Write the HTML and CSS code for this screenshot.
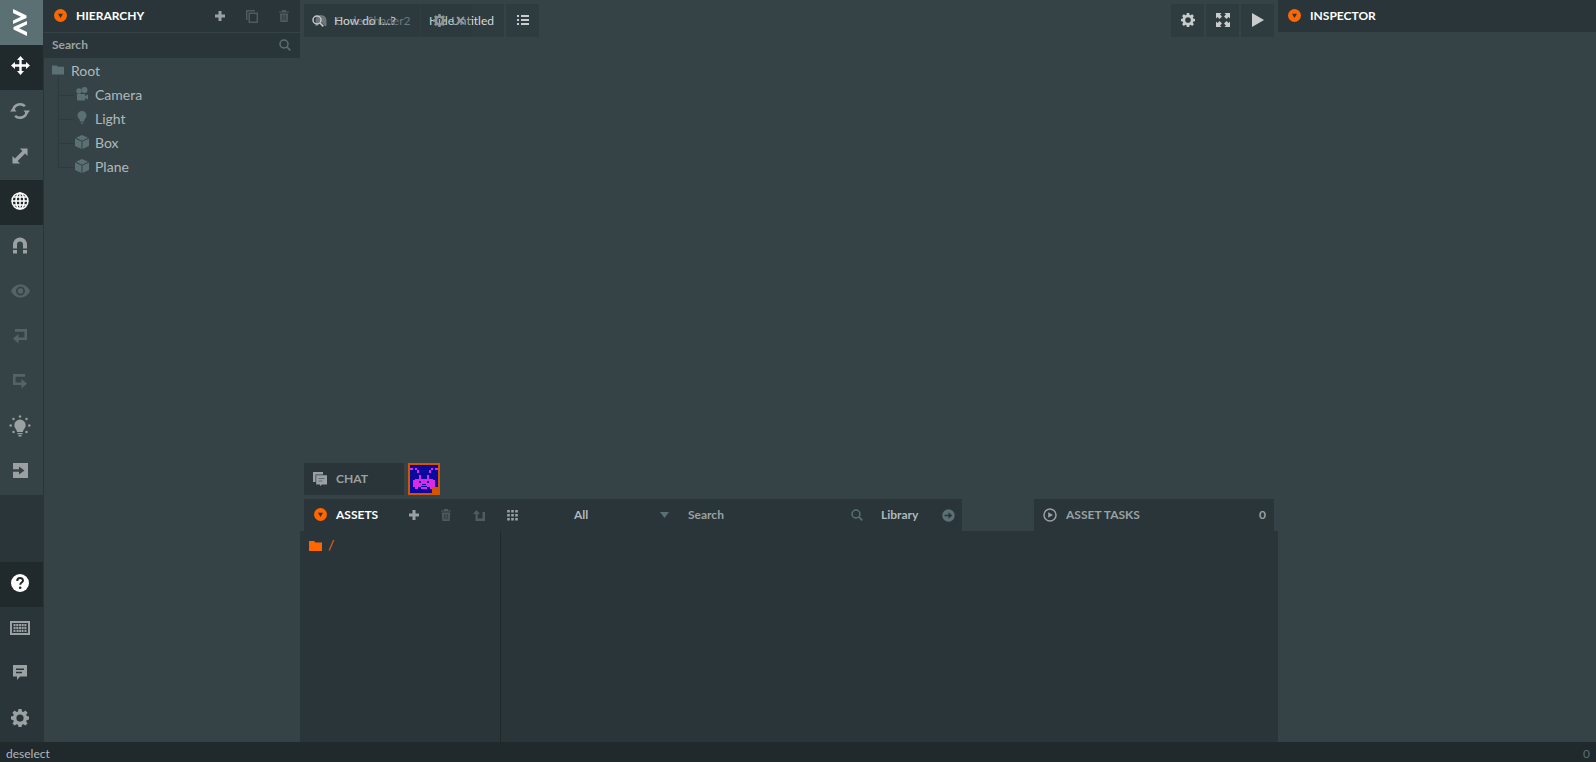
FILE: index.html
```html
<!DOCTYPE html>
<html lang="en">
<head>
<meta charset="utf-8">
<title>Scene Editor</title>
<link rel="stylesheet" href="styles.css">
</head>
<body>
<svg class="defs" aria-hidden="true">
  <symbol id="i-gear" viewBox="0 0 20 20"><path fill-rule="evenodd" d="M8.300 0h3.400l.5 2.700 1.500.6 2.300-1.500 2.400 2.400-1.500 2.200.6 1.500 2.500.5v3.400l-2.500.5-.6 1.500 1.500 2.200-2.400 2.400-2.300-1.500-1.500.6-.5 2.500H8.300l-.5-2.500-1.500-.6L4 18.400 1.600 16l1.500-2.200-.6-1.500L0 11.800V8.400l2.500-.5.600-1.500L1.600 4.200 4 1.800l2.300 1.500 1.500-.6zM10 6.100a4 4 0 1 0 0 8 4 4 0 0 0 0-8z"/></symbol>
  <symbol id="i-search" viewBox="0 0 12 12"><circle cx="5" cy="5" r="4" fill="none" stroke="currentColor" stroke-width="1.500"/><path d="M8 8l3.300 3.300" stroke="currentColor" stroke-width="1.700"/></symbol>
  <symbol id="i-fold" viewBox="0 0 13 13"><circle cx="6.500" cy="6.500" r="6.500"/><path d="M4 4.800h5L6.500 9z" fill="#293538"/></symbol>
  <symbol id="i-plus" viewBox="0 0 10 10"><path d="M3.500 0h3v3.500H10v3H6.500V10h-3V6.500H0v-3h3.500z"/></symbol>
  <symbol id="i-trash" viewBox="0 0 10 12"><path d="M0 1.500h3V0h4v1.500h3v1H0zM.8 3.500h8.400L8.600 12H1.400z"/><path d="M3.300 5v5.500M5 5v5.500M6.700 5v5.500" stroke="#293538" stroke-width=".7"/></symbol>
  <symbol id="i-folder" viewBox="0 0 13 10"><path d="M0 0h5l1.500 1.500H13V10H0z"/></symbol>
  <symbol id="i-cube" viewBox="0 0 14 14"><path d="M7 0l6 2.800L7 5.700 1 2.800zM0 3.600l6.500 3V14L0 11zM14 3.600l-6.500 3V14l6.500-3z"/></symbol>
</svg>
<div class="app">
  <nav class="toolbar" aria-label="Tools">
    <button class="tool logo" aria-label="Menu"><svg width="16" height="28" viewBox="0 0 16 28"><path d="M1 0l13.500 6.500V9L1 15v-3.600l8-3.600L1 4z"/><path d="M15 12v3.600l-8 3.600 8 3.800v4L1.500 20.500V18z"/></svg></button>
    <button class="tool active" aria-label="Translate"><svg width="19" height="19" viewBox="0 0 19 19"><path d="M9.500 0L13 4h-2.300v4.300H15V6l4 3.500-4 3.500v-2.300h-4.300V15H13l-3.500 4L6 15h2.300v-4.300H4V13L0 9.500 4 6v2.300h4.300V4H6z"/></svg></button>
    <button class="tool" aria-label="Rotate"><svg width="20" height="18" viewBox="0 0 20 18"><path class="line" d="M3.200 9A6.900 6.900 0 0 1 14.900 4.200M16.800 9A6.900 6.900 0 0 1 5.100 13.800" stroke-width="2.500"/><path d="M0 9.500h6.500L3.200 5.500zM20 8.500h-6.500l3.300 4z"/></svg></button>
    <button class="tool" aria-label="Scale"><svg width="16" height="16" viewBox="0 0 16 16"><path d="M8 .5h7.500V8l-2.400-2.400-7.500 7.500L8 15.500H.5V8l2.400 2.400 7.500-7.500z"/></svg></button>
    <button class="tool active" aria-label="World space"><svg width="18" height="18" viewBox="0 0 18 18"><g class="line" stroke-width="1.500"><circle cx="9" cy="9" r="8"/><ellipse cx="9" cy="9" rx="4" ry="8"/><path d="M9 1v16M1 9h16M2.500 5h13M2.500 13h13"/></g></svg></button>
    <button class="tool" aria-label="Snap"><svg width="16" height="17" viewBox="0 0 16 17"><path d="M1 11.500V7.500a7 7 0 0 1 14 0v4h-4v-4a3 3 0 0 0-6 0v4zM1 13h4v3.500H1zM11 13h4v3.500h-4z"/></svg></button>
    <button class="tool dim" aria-label="Focus"><svg width="19" height="14" viewBox="0 0 19 14"><path fill-rule="evenodd" d="M9.500.5C5 .5 2 3 0 7c2 4 5 6.500 9.500 6.500S17 11 19 7C17 3 14 .5 9.500.5zm0 2a4.500 4.500 0 1 1 0 9 4.500 4.500 0 0 1 0-9z"/><circle cx="9.500" cy="7" r="2.700"/></svg></button>
    <button class="tool dim" aria-label="Undo"><svg width="16" height="16" viewBox="0 0 16 16"><path d="M3 1h12v11H6.500v3.500L1 10.500 6.500 6v3.500h6V3.800H3z"/></svg></button>
    <button class="tool dim" aria-label="Redo"><svg width="16" height="16" viewBox="0 0 16 16"><path d="M13 1H1v11h8.500v3.500l5.500-5L9.500 6v3.500h-6V3.800H13z"/></svg></button>
    <button class="tool" aria-label="Bake lights"><svg width="22" height="22" viewBox="0 0 22 22"><path d="M11 4.500a5.700 5.700 0 0 0-5.700 5.700c0 3 2.700 4 2.700 6.800h6c0-2.800 2.700-3.800 2.700-6.800A5.700 5.700 0 0 0 11 4.500zM8.500 18h5v1.300h-5zM9.500 20h3v1.500h-3z"/><circle cx="11" cy="1.500" r="1.200"/><circle cx="4.500" cy="4" r="1.200"/><circle cx="17.500" cy="4" r="1.200"/><circle cx="1.700" cy="10.500" r="1.200"/><circle cx="20.300" cy="10.500" r="1.200"/><circle cx="4.500" cy="17" r="1.200"/><circle cx="17.500" cy="17" r="1.200"/></svg></button>
    <button class="tool" aria-label="Publish"><svg width="15" height="15" viewBox="0 0 15 15"><path d="M0 0h15v15H0z"/><path d="M0 6.200h6V3.500l5.500 4L6 11.500V8.800H0z" fill="#364346"/></svg></button>
    <div class="gap"></div>
    <button class="tool active" aria-label="Help"><svg width="18" height="18" viewBox="0 0 18 18"><circle cx="9" cy="9" r="9"/><path d="M6.200 7C6.200 3 12 3.200 12 6.500c0 2-2.800 2.200-2.800 4.300" fill="none" stroke="#20292b" stroke-width="2"/><circle cx="9.200" cy="13.700" r="1.300" fill="#20292b"/></svg></button>
    <button class="tool" aria-label="Keyboard shortcuts"><svg width="20" height="14" viewBox="0 0 20 14"><path class="line" d="M1 1h18v12H1z" stroke-width="2"/><path d="M3.500 4.200h13M3.500 7h13M3.500 9.800h2M6.500 9.800h7M14.500 9.800h2" stroke="currentColor" stroke-width="2.200" stroke-dasharray="2.100 .6"/></svg></button>
    <button class="tool" aria-label="Forum"><svg width="14" height="15" viewBox="0 0 14 15"><path fill-rule="evenodd" d="M0 0h14v11.500H7L4 15v-3.500H0zM3 3.500V5h8V3.500zM3 6.800v1.500h6V6.800z"/></svg></button>
    <button class="tool" aria-label="Settings"><svg width="18" height="18"><use href="#i-gear"/></svg></button>
  </nav>

  <aside class="hierarchy">
    <header class="head">
      <button class="fold" aria-label="Fold hierarchy"><svg width="13" height="13"><use href="#i-fold"/></svg></button>
      <h2>HIERARCHY</h2>
      <div class="actions">
        <button aria-label="Add entity"><svg width="10" height="10"><use href="#i-plus"/></svg></button>
        <button class="dim" aria-label="Duplicate"><svg width="12" height="13" viewBox="0 0 12 13"><path class="line" stroke-width="1.500" d="M3.200 3.200h8.100v9.100H3.200zM.7 10V.7H9"/></svg></button>
        <button class="dim" aria-label="Delete"><svg width="10" height="12"><use href="#i-trash"/></svg></button>
      </div>
    </header>
    <label class="search"><input type="text" placeholder="Search" aria-label="Search hierarchy"><svg width="12" height="12"><use href="#i-search"/></svg></label>
    <ul class="tree">
      <li class="row"><svg width="12" height="10"><use href="#i-folder"/></svg>Root</li>
      <li>
        <ul class="branch">
          <li class="row"><svg width="14" height="14" viewBox="0 0 14 14"><circle cx="4" cy="4" r="2.700"/><circle cx="9.500" cy="3" r="3"/><path d="M2 7h8v2l3-1.500v5L10 11v2.500H2z"/></svg>Camera</li>
          <li class="row"><svg width="14" height="14" viewBox="0 0 14 14"><path d="M7 0a4.500 4.500 0 0 0-4.500 4.500C2.500 7 5 8 5 10.500h4C9 8 11.500 7 11.500 4.500A4.500 4.500 0 0 0 7 0zM5.500 11.500h3L7 13.500z"/></svg>Light</li>
          <li class="row"><svg width="14" height="14"><use href="#i-cube"/></svg>Box</li>
          <li class="row"><svg width="14" height="14"><use href="#i-cube"/></svg>Plane</li>
        </ul>
      </li>
    </ul>
  </aside>

  <main class="center">
    <section class="viewport">
      <div class="topbar">
        <div class="titles">
          <div class="chip project"><svg width="12" height="12" viewBox="0 0 12 12"><path d="M6 0a5.500 5.500 0 0 1 5.500 5.500V11H10L6 7 2 11H.5V5.500A5.500 5.500 0 0 1 6 0z"/></svg>CoderShader2</div>
          <div class="chip scene">Untitled</div>
          <div class="help-layer">
            <svg width="12" height="12"><use href="#i-search"/></svg>
            <input type="text" placeholder="How do I...?" aria-label="How do I">
            <button class="hide">Hide</button>
          </div>
          <div class="scene-tools">
            <svg width="13" height="13"><use href="#i-gear"/></svg>
            <svg width="9" height="9" viewBox="0 0 9 9"><path d="M1 1l7 7M8 1L1 8" stroke="currentColor" stroke-width="2"/></svg>
          </div>
        </div>
        <button class="square" aria-label="Scenes"><svg width="12" height="10" viewBox="0 0 12 10"><path d="M0 0h2v2H0zM4 0h8v2H4zM0 4h2v2H0zM4 4h8v2H4zM0 8h2v2H0zM4 8h8v2H4z"/></svg></button>
        <div class="launch">
          <button class="square" aria-label="Scene settings"><svg width="14" height="14"><use href="#i-gear"/></svg></button>
          <button class="square" aria-label="Full screen"><svg width="14" height="14" viewBox="0 0 14 14"><path d="M0 0h5.500L4 1.500l2 2L3.500 6l-2-2L0 5.500zM14 0v5.500L12.500 4l-2 2L8 3.500l2-2L8.500 0zM0 14V8.500L1.500 10l2-2L6 10.500l-2 2L5.500 14zM14 14H8.500l1.500-1.500-2-2L10.500 8l2 2L14 8.500z"/></svg></button>
          <button class="square" aria-label="Launch"><svg width="12" height="14" viewBox="0 0 12 14"><path d="M0 0l12 7-12 7z"/></svg></button>
        </div>
      </div>
      <div class="chatbar">
        <button class="chat"><svg width="14" height="14" viewBox="0 0 14 14"><path d="M0 0h10v2.500H2.500V10H0z"/><path d="M3.200 3.200H14v9.300H9L7 14v-1.500H3.200z"/><path d="M5.500 6.500h6M5.500 9h4" stroke="#5f6b6e"/></svg>CHAT</button>
        <svg class="avatar" width="32" height="32" viewBox="0 0 32 32" role="img" aria-label="User avatar">
          <path fill="#0a0aa0" d="M0 0h32v32H0z"/>
          <g fill="#d92be6"><path d="M2 5h3v2H2zM7 5h2v2h2v3H9V7H7zM23 5h2v2h-2v3h-2V7h2zM27 5h3v2h-3zM11 12h2v4h-2zM19 12h2v4h-2z"/><path fill-rule="evenodd" d="M7 16h18v1h2v7h-2v2h-3v-2h-3v2h-6v-2h-3v2H7v-2H5v-7h2zM11 18v2h2v-2zM19 18v2h2v-2zM14 21v1h4v-1zM13 23v1h6v-1z"/></g>
          <path fill="#d45500" fill-rule="evenodd" d="M0 0h32v32H0zM2 2v28h22v-6h6V2z"/>
        </svg>
      </div>
    </section>
    <section class="assets">
      <div class="asset-heads">
        <header class="asset-head">
          <button class="fold" aria-label="Fold assets"><svg width="13" height="13"><use href="#i-fold"/></svg></button>
          <h2>ASSETS</h2>
          <div class="asset-actions">
            <button aria-label="Add asset"><svg width="10" height="10"><use href="#i-plus"/></svg></button>
            <button class="dim" aria-label="Delete asset"><svg width="10" height="12"><use href="#i-trash"/></svg></button>
            <button class="dim" aria-label="Up one folder"><svg width="12" height="11" viewBox="0 0 12 11"><path d="M3.500 0L7 4H4.700v4.500H9.500V2H12v9H2.500V4H0z"/></svg></button>
            <button aria-label="Grid view"><svg width="11" height="11" viewBox="0 0 11 11"><path d="M1.500 0v11M5.500 0v11M9.500 0v11" stroke="currentColor" stroke-width="2.600" stroke-dasharray="2.600 1.400"/></svg></button>
          </div>
          <div class="pick"><select aria-label="Asset type"><option>All</option></select><svg width="9" height="6" viewBox="0 0 9 6"><path d="M0 0h9L4.500 6z"/></svg></div>
          <label class="find"><input type="text" placeholder="Search" aria-label="Search assets"><svg width="12" height="12"><use href="#i-search"/></svg></label>
          <a class="library" href="#library">Library<svg width="13" height="13" viewBox="0 0 13 13"><circle cx="6.500" cy="6.500" r="6.200"/><path d="M2.500 5.700h4V3.300L10.300 6.500 6.500 9.700V7.300h-4z" fill="#293538"/></svg></a>
        </header>
        <button class="tasks"><svg width="14" height="14" viewBox="0 0 14 14"><circle class="line" cx="7" cy="7" r="6" stroke-width="1.500"/><path d="M5.200 4.200L10 7 5.200 9.800z"/></svg>ASSET TASKS<span>0</span></button>
      </div>
      <div class="asset-body">
        <div class="folders"><svg width="13" height="10"><use href="#i-folder"/></svg>/</div>
        <div class="files"></div>
      </div>
    </section>
  </main>

  <aside class="inspector">
    <header class="head">
      <button class="fold" aria-label="Fold inspector"><svg width="13" height="13"><use href="#i-fold"/></svg></button>
      <h2>INSPECTOR</h2>
    </header>
  </aside>

  <footer class="status"><span>deselect</span><span class="count">0</span></footer>
</div>
</body>
</html>
```

FILE: styles.css
```css
:root {
  --base: #364346;
  --dark: #293538;
  --darkest: #20292b;
  --text: #b1b8ba;
  --muted: #9ba1a3;
  --faint: #5b7073;
  --off: #4f5c5f;
  --orange: #f60;
}
* { box-sizing: border-box; }
body {
  margin: 0;
  background: var(--base);
  color: var(--text);
  font: 12px/16px Lato, "Open Sans", sans-serif;
}
svg { display: block; flex: none; fill: currentColor; }
.line { fill: none; stroke: currentColor; }
.defs { position: absolute; width: 0; height: 0; }
button, input, select {
  margin: 0;
  padding: 0;
  border: 0;
  background: none;
  color: inherit;
  font: inherit;
  appearance: none;
}
button { display: flex; align-items: center; }
h2 { margin: 0; color: #fff; font-size: 12px; line-height: 16px; font-weight: 700; }
ul { margin: 0; padding: 0; list-style: none; }
input { min-width: 0; flex: 1; }
input::placeholder { color: inherit; opacity: 1; }

.app {
  display: grid;
  grid-template: minmax(0, 1fr) 20px / 44px 256px minmax(0, 1fr) 318px;
  height: 100vh;
}

/* left toolbar */
.toolbar {
  display: flex;
  flex-direction: column;
  background: var(--base);
  border-right: 1px solid var(--dark);
  color: var(--muted);
}
.tool { height: 45px; justify-content: center; padding-right: 3px; padding-bottom: 4px; flex: none; }
.tool.active { background: var(--darkest); color: #fff; }
.tool.dim { color: #566365; }
.tool.logo { background: #5b7073; color: #fff; padding-bottom: 0; }
.gap { flex: 1; background: var(--dark); }
.gap ~ .tool:not(.active) { background: var(--dark); }

/* panels */
.head {
  display: flex;
  align-items: center;
  height: 32px;
  padding: 0 11px 0 10px;
  background: var(--dark);
}
.fold { color: var(--orange); margin-right: 9px; }
.fold svg { margin-bottom: 2px; }
.actions { display: flex; margin-left: auto; gap: 21px; color: var(--muted); }
.dim { color: var(--off); }
.search {
  display: flex;
  align-items: center;
  height: 25px;
  margin-top: 1px;
  padding: 0 9px 2px 8px;
  background: var(--dark);
  color: var(--muted);
  font-weight: 700;
}
.search svg, .find svg { color: var(--faint); }
.tree { font-size: 14px; padding: 1px 8px; }
.row { display: flex; align-items: center; gap: 7px; height: 24px; }
.row svg { color: var(--faint); margin-bottom: 3px; }
.branch { margin-left: 6px; position: relative; }
.branch .row { padding-left: 17px; gap: 6px; }
.branch::before { content: ""; position: absolute; left: 0; top: -7px; bottom: 12px; width: 1px; background: #2e3b3e; }
.branch .row::before { content: ""; position: absolute; left: 0; width: 16px; height: 1px; background: #2e3b3e; }

/* viewport */
.center { display: flex; flex-direction: column; min-width: 0; }
.viewport { display: flex; flex-direction: column; justify-content: space-between; flex: 1; padding: 4px; }
.topbar { display: flex; gap: 2px; }
.titles { display: flex; gap: 1px; position: relative; }
.chip { display: flex; align-items: center; height: 33px; background: #2f3c3f; }
.project { width: 116px; padding-left: 11px; gap: 8px; color: #8b9496; }
.scene { width: 83px; justify-content: flex-end; padding-right: 10px; color: #d5d8d9; }
.help-layer {
  position: absolute;
  inset: 0 32px 0 0;
  display: flex;
  align-items: center;
  padding-left: 8px;
  gap: 10px;
  background: rgba(41, 53, 56, .3);
  color: #c5cacb;
}
.help-layer input { height: 16px; }
.hide { width: 43px; }
.scene-tools { position: absolute; left: 129px; top: 10px; display: flex; align-items: center; gap: 10px; color: #8d9597; }
.square { width: 33px; height: 33px; justify-content: center; padding-bottom: 2px; background: #2f3c3f; color: #c8cccd; }
.launch { display: flex; gap: 2px; margin-left: auto; }
.chatbar { display: flex; gap: 4px; }
.chat {
  width: 100px;
  height: 32px;
  padding-left: 9px;
  gap: 9px;
  background: var(--dark);
  color: var(--muted);
  font-weight: 700;
}

/* assets */
.assets { display: flex; flex-direction: column; height: 243px; }
.asset-heads { display: flex; justify-content: space-between; padding: 0 4px; }
.asset-head {
  display: flex;
  align-items: center;
  width: 658px;
  height: 32px;
  padding: 0 7px 0 10px;
  background: var(--dark);
  font-weight: 700;
}
.asset-head h2 { width: 73px; }
.asset-actions { display: flex; gap: 22px; color: var(--muted); }
.pick { display: flex; align-items: center; width: 95px; margin-left: 56px; }
.pick select { flex: 1; }
.pick svg { color: var(--faint); }
.find { display: flex; align-items: center; flex: 1; margin-left: 19px; color: var(--muted); }
.library { display: flex; align-items: center; justify-content: space-between; width: 74px; margin-left: 18px; color: var(--text); text-decoration: none; }
.library svg { color: var(--faint); }
.tasks { width: 240px; height: 32px; padding: 0 8px 0 9px; gap: 9px; background: var(--dark); color: var(--muted); font-weight: 700; }
.tasks span { margin-left: auto; }
.asset-body { display: flex; flex: 1; background: var(--dark); }
.folders { display: flex; gap: 6px; width: 201px; padding: 6px 9px; border-right: 1px solid var(--darkest); color: var(--orange); font-size: 14px; }
.folders svg { margin-top: 4px; }
.files { flex: 1; }

.status {
  grid-column: 1 / -1;
  display: flex;
  align-items: center;
  justify-content: space-between;
  padding: 4px 6px 0;
  background: var(--darkest);
}
.count { color: var(--faint); }
```
